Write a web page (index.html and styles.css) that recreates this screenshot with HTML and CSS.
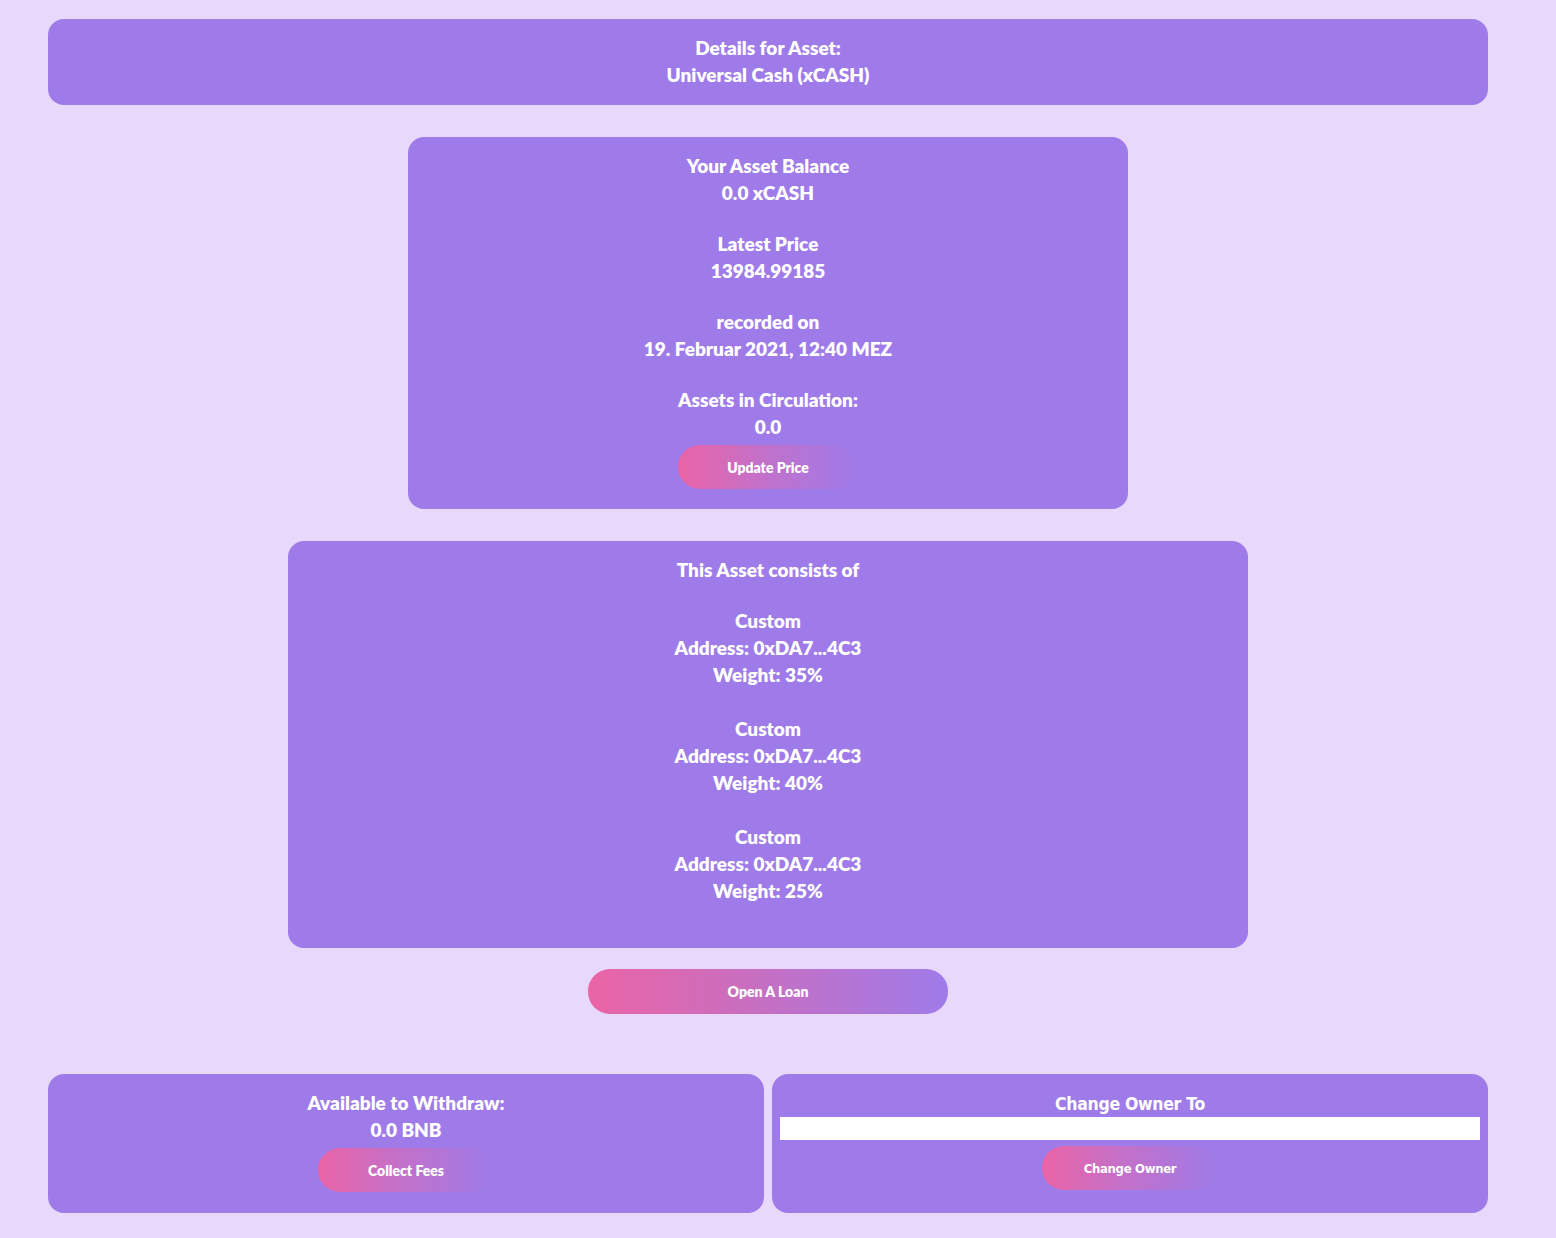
FILE: index.html
```html
<!DOCTYPE html>
<html>
<head>
<meta charset="utf-8">
<link rel="stylesheet" href="styles.css">
</head>
<body>
<main class="page">
  <section class="card header">
    <div>Details for Asset:</div>
    <div>Universal Cash (xCASH)</div>
  </section>

  <section class="card balance">
    <div class="block">
      <div>Your Asset Balance</div>
      <div>0.0 xCASH</div>
    </div>
    <div class="block">
      <div>Latest Price</div>
      <div>13984.99185</div>
    </div>
    <div class="block">
      <div>recorded on</div>
      <div>19. Februar 2021, 12:40 MEZ</div>
    </div>
    <div class="block last">
      <div>Assets in Circulation:</div>
      <div>0.0</div>
    </div>
    <button class="btn fade w180">Update Price</button>
  </section>

  <section class="card composition">
    <div class="comp-title">This Asset consists of</div>
    <div class="group">
      <div>Custom</div>
      <div>Address: 0xDA7...4C3</div>
      <div>Weight: 35%</div>
    </div>
    <div class="group">
      <div>Custom</div>
      <div>Address: 0xDA7...4C3</div>
      <div>Weight: 40%</div>
    </div>
    <div class="group">
      <div>Custom</div>
      <div>Address: 0xDA7...4C3</div>
      <div>Weight: 25%</div>
    </div>
  </section>

  <button class="btn loan">Open A Loan</button>

  <div class="bottom">
    <section class="card small">
      <div>Available to Withdraw:</div>
      <div>0.0 BNB</div>
      <button class="btn fade w176 collect">Collect Fees</button>
    </section>
    <section class="card small owner">
      <div class="narrow">Change Owner To</div>
      <input class="owner-input" type="text">
      <button class="btn fade w176 narrow-btn">Change Owner</button>
    </section>
  </div>
</main>
</body>
</html>
```

FILE: styles.css
```css
html, body {
  margin: 0;
  padding: 0;
  background: #e8d8fb;
}
body {
  font-family: "Lato", "Open Sans", sans-serif;
  font-weight: 800;
  font-size: 19px;
  line-height: 27px;
  color: #ffffff;
}
.page {
  width: 1440px;
  margin-left: 48px;
  padding-top: 19px;
  padding-bottom: 26px;
  display: flex;
  flex-direction: column;
  align-items: center;
}
.card {
  background: #9f7be9;
  border-radius: 16px;
  text-align: center;
  box-sizing: border-box;
}
.header {
  width: 1440px;
  padding: 15px 0 17px;
}
.balance {
  width: 720px;
  margin-top: 32px;
  padding: 15px 0 20px;
  display: flex;
  flex-direction: column;
  align-items: center;
}
.block {
  margin-bottom: 24px;
}
.block.last {
  margin-bottom: 5px;
}
.composition {
  width: 960px;
  margin-top: 32px;
  padding: 15px 0 44px;
}
.comp-title {
  margin-bottom: 24px;
}
.group + .group {
  margin-top: 27px;
}
.btn {
  border: none;
  color: #ffffff;
  font-family: "Lato", "Open Sans", sans-serif;
  font-weight: 800;
  font-size: 14px;
  height: 44px;
  border-radius: 22px;
  padding: 0;
  cursor: pointer;
}
.fade {
  background: linear-gradient(90deg, #ea64a6 0%, #c470c8 45%, #9f7be9 100%);
}
.w180 { width: 180px; }
.w176 { width: 176px; }
.loan {
  width: 360px;
  height: 45px;
  margin-top: 21px;
  background: linear-gradient(90deg, #ea64a6 0%, #cc6dbd 40%, #9f7be9 100%);
}
.bottom {
  width: 1440px;
  margin-top: 60px;
  display: flex;
  gap: 8px;
}
.small {
  flex: 1;
  padding: 15px 8px 21px;
  display: flex;
  flex-direction: column;
  align-items: center;
}
.collect {
  margin-top: 5px;
}
.narrow {
  font-family: "DejaVu Sans Condensed", "Liberation Sans Narrow", sans-serif;
  font-weight: 700;
  font-size: 17.5px;
  letter-spacing: -0.3px;
  padding-top: 3px;
  line-height: 24px;
}
.owner-input {
  width: 100%;
  height: 23px;
  box-sizing: border-box;
  border: none;
  background: #ffffff;
  margin: 1px 0 0;
  padding: 0;
}
.narrow-btn {
  margin-top: 6px;
  font-family: "DejaVu Sans Condensed", "Liberation Sans Narrow", sans-serif;
  font-weight: 700;
  font-size: 13px;
  letter-spacing: -0.3px;
}
```
